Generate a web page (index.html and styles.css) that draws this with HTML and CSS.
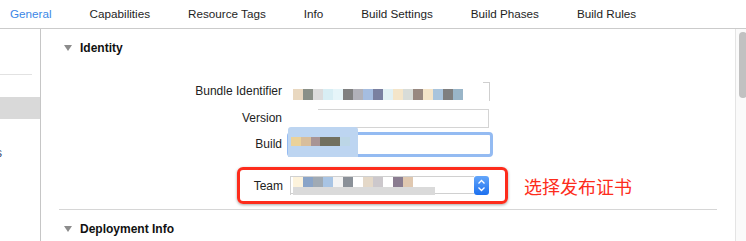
FILE: index.html
```html
<!DOCTYPE html>
<html lang="en">
<head>
  <meta charset="UTF-8">
  <meta name="viewport" content="width=device-width, initial-scale=1.0">
  <title>General</title>
  <link rel="stylesheet" href="styles.css">
</head>
<body>
  <div class="tabs">
    <span class="tab active">General</span>
    <span class="tab">Capabilities</span>
    <span class="tab">Resource Tags</span>
    <span class="tab">Info</span>
    <span class="tab">Build Settings</span>
    <span class="tab">Build Phases</span>
    <span class="tab">Build Rules</span>
  </div>

  <div class="main">
    <div class="sidebar">
      <div class="side-sep"></div>
      <div class="side-sel"></div>
      <div class="side-item"><span>s</span></div>
    </div>

    <div class="content">
      <div class="section-head">
        <svg class="disclosure" width="8" height="6" viewBox="0 0 8 6"><polygon points="0,0 8,0 4,6" /></svg>
        <span>Identity</span>
      </div>

      <div class="form">
        <div class="row">
          <div class="label">Bundle Identifier</div>
          <div class="field bundle">
            <div class="blur">
              <i style="background:#e9d8c0"></i><i style="background:#8a9088"></i><i style="background:#dcdcdc"></i>
              <i style="background:#d8eef4"></i><i style="background:#e6f5f9"></i><i style="background:#808080"></i>
              <i style="background:#b1b1b9"></i><i style="background:#a5bde0"></i><i style="background:#7a80a0"></i>
              <i style="background:#e2f1f4"></i><i style="background:#f4e5c9"></i><i style="background:#d8dcd8"></i>
              <i style="background:#988880"></i><i style="background:#f4e4c8"></i><i style="background:#a9c4dc"></i>
              <i style="background:#7f7f7f"></i><i style="background:#99b5c8"></i>
            </div>
          </div>
        </div>

        <div class="row version-row">
          <div class="label">Version</div>
          <div class="field version"></div>
        </div>

        <div class="row build-row">
          <div class="label">Build</div>
          <div class="field build">
            <div class="redact">
              <i style="background:#ebd29a;width:10px"></i><i style="background:#d8be9c;width:10px"></i>
              <i style="background:#a89495;width:9px"></i><i style="background:#72705f;width:20px"></i>
              <i style="background:#bcd6e6;width:10px"></i>
            </div>
          </div>
        </div>

        <div class="team-line">
          <div class="team-box">
            <div class="label team-label">Team</div>
            <div class="popup">
              <div class="popup-value">
                <div class="blur small">
                  <i style="background:#fdf3dc"></i><i style="background:#8aa4c8"></i><i style="background:#a0aab4"></i>
                  <i style="background:#a8c4e4"></i><i style="background:#f4f4f4"></i><i style="background:#8a9098"></i>
                  <i style="background:#ffffff"></i><i style="background:#e4d8c8"></i><i style="background:#ccc8cc"></i>
                  <i style="background:#ffffff"></i><i style="background:#8a7c90"></i><i style="background:#e0c8b0"></i>
                </div>
                <div class="grey-bar"></div>
              </div>
              <div class="stepper">
                <svg width="15" height="19" viewBox="0 0 15 19">
                  <path d="M4.5 7.5 L7.5 4.5 L10.5 7.5 M4.5 11.5 L7.5 14.5 L10.5 11.5" fill="none" stroke="#fff" stroke-width="1.3" />
                </svg>
              </div>
            </div>
          </div>
          <span class="note">选择发布证书</span>
        </div>
      </div>

      <div class="divider"></div>

      <div class="section-head deploy">
        <svg class="disclosure" width="8" height="6" viewBox="0 0 8 6"><polygon points="0,0 8,0 4,6" /></svg>
        <span>Deployment Info</span>
      </div>
    </div>

    <div class="scrollbar">
      <div class="thumb"></div>
    </div>
  </div>
</body>
</html>
```

FILE: styles.css
```css
body {
  margin: 0;
  width: 746px;
  height: 241px;
  overflow: hidden;
  font-family: "Liberation Sans", Arial, sans-serif;
  font-size: 12px;
  color: #222;
  background-color: #fff;
}

.tabs {
  display: flex;
  gap: 38px;
  height: 28px;
  line-height: 28px;
  padding-left: 10px;
  border-bottom: 1px solid #cbcbcb;
  font-size: 11.7px;
  white-space: nowrap;
}

.tab {
  color: #1e1e1e;
}

.tab.active {
  color: #3b87e6;
}

.main {
  display: flex;
  height: 212px;
}

.sidebar {
  width: 40px;
  flex-shrink: 0;
  border-right: 1px solid #c6c6c6;
  overflow: hidden;
}

.side-sep {
  width: 32px;
  height: 1px;
  margin-top: 45px;
  background-color: #e2e2e2;
}

.side-sel {
  height: 22px;
  margin-top: 22px;
  background-color: #d9d9d9;
}

.side-item {
  margin-top: 27px;
  line-height: 14px;
  color: #34476c;
}

.side-item span {
  margin-left: -4px;
}

.content {
  flex: 1;
  padding: 0 18px;
  min-width: 0;
}

.section-head {
  display: flex;
  align-items: center;
  gap: 8px;
  height: 14px;
  margin-top: 12px;
  padding-left: 5px;
  font-weight: bold;
  color: #111;
}

.disclosure polygon {
  fill: #8c8c8c;
}

.section-head.deploy {
  margin-top: 12px;
}

.form {
  margin-top: 26px;
}

.row {
  display: flex;
  align-items: center;
  height: 20px;
}

.label {
  width: 223px;
  margin-right: 7px;
  text-align: right;
  white-space: nowrap;
}

.field {
  height: 19px;
  box-sizing: border-box;
}

.bundle {
  width: 201px;
  padding: 7px 0 0 4px;
  border-right: 1px solid #cfcfcf;
  background: linear-gradient(#cfcfcf, #cfcfcf) no-repeat right top / 6px 1px;
}

.blur {
  display: flex;
  height: 11px;
}

.blur i {
  width: 10px;
  height: 100%;
}

.version-row {
  margin-top: 7px;
}

.version {
  width: 171px;
  margin-left: 29px;
  border: 1px solid #d4d4d4;
  border-left: none;
}

.build-row {
  margin-top: 6px;
}

.build {
  position: relative;
  width: 206px;
  height: 25px;
  margin-left: -2px;
  border: 3px solid #94bbf2;
  border-radius: 4px;
  background-color: #fff;
}

.redact {
  position: absolute;
  left: -2px;
  top: -8px;
  width: 70px;
  height: 30px;
  box-sizing: border-box;
  display: flex;
  padding: 10px 0 0 3px;
  border-radius: 3px 3px 0 0;
  background-color: #bdd5f1;
}

.redact i {
  height: 9px;
}

.team-line {
  display: flex;
  align-items: center;
  margin-top: 13px;
}

.team-box {
  display: flex;
  align-items: center;
  width: 271px;
  height: 37px;
  box-sizing: border-box;
  margin-left: 178px;
  border: 3px solid #fd2c1c;
  border-radius: 6px;
  box-shadow: 0 1px 3px rgba(0, 0, 0, 0.35);
}

.team-label {
  width: 43px;
}

.popup {
  display: flex;
  width: 198px;
  height: 19px;
  border-left: 1px solid #d0d0d0;
}

.popup-value {
  flex: 1;
  padding-left: 2px;
  border-top: 1px solid #d0d0d0;
  border-bottom: 1px solid #d0d0d0;
  box-sizing: border-box;
  height: 18px;
}

.blur.small {
  height: 10px;
}

.grey-bar {
  width: 142px;
  height: 8px;
  background-color: #dadada;
}

.stepper {
  width: 15px;
  height: 19px;
  border-radius: 3px;
  background: linear-gradient(#64a6fa, #1c70ef);
}

.stepper svg {
  display: block;
}

.note {
  margin-left: 16px;
  font-family: "Noto Sans CJK SC", sans-serif;
  font-size: 18px;
  color: #fd2c1c;
}

.divider {
  height: 1px;
  margin-top: 5px;
  background-color: #d6d6d6;
}

.scrollbar {
  width: 7px;
  flex-shrink: 0;
  padding: 3px 0 0 3px;
  border-left: 1px solid #e4e4e4;
  background-color: #fafafa;
  overflow: hidden;
}

.thumb {
  width: 8px;
  height: 66px;
  border-radius: 4px;
  background-color: #c1c1c1;
}
```
